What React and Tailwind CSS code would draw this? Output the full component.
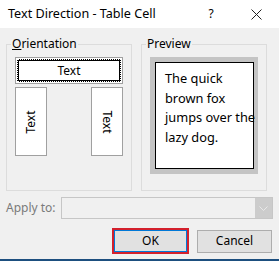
export default function App() {
  const font = { fontFamily: '"Noto Sans", "Open Sans", Arial, sans-serif' };

  return (
    <div className="w-[279px] h-[261px] flex flex-col bg-[#f0f0f0] text-[12px] text-black overflow-hidden" style={font}>
      {/* Title bar */}
      <div className="h-[28px] bg-white flex items-center pl-[8px] shrink-0">
        <span className="flex-1 text-[12.6px] leading-4">Text Direction - Table Cell</span>
        <span className="w-[10px] text-center leading-4 mr-[35px]">?</span>
        <svg width="11" height="11" viewBox="0 0 11 11" className="mr-[17px]">
          <path d="M0.5 0.5 L10.5 10.5 M10.5 0.5 L0.5 10.5" stroke="#222" strokeWidth="1" fill="none" />
        </svg>
      </div>

      {/* Group boxes */}
      <div className="flex gap-[9px] pl-[6px] mt-[8px]">
        <fieldset className="w-[126px] h-[155px] border border-[#dcdcdc] px-[8px] pt-[5px]">
          <legend className="ml-[-4px] px-[1px] leading-4">
            <span className="underline">O</span>rientation
          </legend>
          {/* horizontal text, focused */}
          <div className="w-[108px] h-[27px] border border-[#a0a0a0] bg-white p-px">
            <div className="h-full bg-black border border-dotted border-white">
              <div className="h-full bg-white border border-black flex items-center justify-center leading-4">Text</div>
            </div>
          </div>
          <div className="flex justify-between mt-[3px]">
            <div className="w-[32px] h-[69px] border border-[#a0a0a0] bg-white flex items-center justify-center">
              <span className="-rotate-90 leading-4">Text</span>
            </div>
            <div className="w-[32px] h-[69px] border border-[#a0a0a0] bg-white flex items-center justify-center">
              <span className="rotate-90 leading-4">Text</span>
            </div>
          </div>
        </fieldset>

        <fieldset className="w-[126px] h-[155px] border border-[#dcdcdc] px-[8px] pt-[5px]">
          <legend className="ml-[-4px] px-[1px] leading-4">Preview</legend>
          <div className="w-[108px] h-[117px] bg-[#c4c4c4] p-[5px] pr-[4px]">
            <div className="h-full bg-white border border-black pl-[9px] pt-[6px] text-[12.8px] leading-[19.7px] whitespace-nowrap">
              The quick<br />
              brown fox<br />
              jumps over the<br />
              lazy dog.
            </div>
          </div>
        </fieldset>
      </div>

      {/* Apply to */}
      <div className="flex items-center mt-[6px] pl-[6px]">
        <span className="w-[55px] text-[#7a7a7a] leading-4">Apply to:</span>
        <div className="w-[212px] h-[22px] border border-[#c6c6c6] flex justify-end">
          <div className="w-[17px] h-full bg-[#cccccc] flex items-center justify-center">
            <svg width="9" height="5" viewBox="0 0 9 5">
              <path d="M0.5 0.5 L4.5 4.5 L8.5 0.5" stroke="#e8e8e8" strokeWidth="1" fill="none" />
            </svg>
          </div>
        </div>
      </div>

      {/* Buttons */}
      <div className="flex items-center justify-end gap-[8px] pr-[7px] mt-[9px]">
        <div className="w-[77px] h-[26px] border-2 border-[#d3202c]">
          <button className="w-full h-full border border-[#0078d7] bg-[#e1e1e1] leading-4">OK</button>
        </div>
        <button className="w-[75px] h-[23px] border border-[#adadad] bg-[#e1e1e1] leading-4">Cancel</button>
      </div>

      <div className="mt-auto h-[2px] bg-[#1d4f7f]" />
    </div>
  );
}
